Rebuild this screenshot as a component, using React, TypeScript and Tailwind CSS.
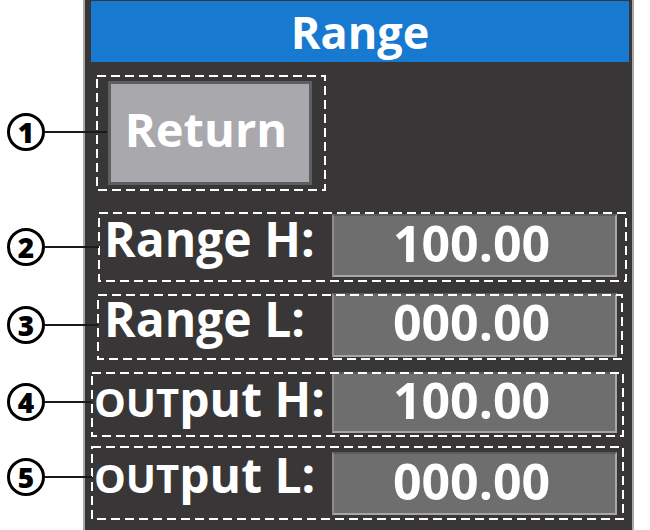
import React from "react";

const font = { fontFamily: '"Open Sans", "Noto Sans", sans-serif' };

function Dashed() {
  return (
    <svg className="pointer-events-none absolute inset-0 h-full w-full overflow-visible">
      <rect
        x="0"
        y="0"
        width="100%"
        height="100%"
        fill="none"
        stroke="#ffffff"
        strokeWidth="2"
        strokeDasharray="9 5"
      />
    </svg>
  );
}

function ValueBox({ value, className }: { value: string; className: string }) {
  return (
    <div
      className={`flex w-[285px] shrink-0 items-center justify-center border-2 border-t-[#5c5c5c] border-l-[#8c8c8c] border-r-[#a7a7a7] border-b-[#a7a7a7] bg-[#6e6e6e] pb-[6px] pr-[6px] text-[50px] font-bold leading-none text-white ${className}`}
    >
      {value}
    </div>
  );
}

function Callout({ n, top, len }: { n: string; top: string; len: string }) {
  return (
    <div className={`absolute left-[7px] flex items-center ${top}`}>
      <div className="flex h-[38px] w-[38px] items-center justify-center rounded-full border-[3px] border-black bg-white pb-[1px] text-[28px] font-extrabold leading-none text-black">
        {n}
      </div>
      <div className={`h-[2px] bg-[#1a1a1a] ${len}`} />
    </div>
  );
}

export default function App() {
  return (
    <div className="relative h-[530px] w-[650px] overflow-hidden bg-white" style={font}>
      <div className="ml-[83px] flex h-[530px] w-[551px] flex-col border-x-2 border-[#a9a8ad] bg-[#383637]">
        {/* Header */}
        <div className="ml-[6px] mr-[3px] mt-[1px] flex h-[61px] items-start justify-center bg-[#1779cf] text-[45px] font-bold leading-[61px] text-white">
          Range
        </div>

        {/* Return */}
        <div className="relative ml-[12px] mt-[14px] h-[114px] w-[228px]">
          <Dashed />
          <div className="ml-[11px] mt-[5px] flex h-[104px] w-[204px] items-center justify-center border-[3px] border-[#5f5e62] bg-[#a9a8ad] pb-[8px] pr-[8px] text-[47px] font-bold leading-none text-white">
            Return
          </div>
        </div>

        {/* Range H */}
        <div className="relative ml-[14px] mt-[23px] flex h-[68px] w-[527px] items-start">
          <Dashed />
          <div className="mt-[2px] w-[233px] shrink-0 whitespace-nowrap pl-[5px] text-[48px] font-bold leading-none text-white">
            Range H:
          </div>
          <ValueBox value="100.00" className="mt-[1px] h-[63px]" />
        </div>

        {/* Range L */}
        <div className="relative ml-[13px] mt-[14px] flex h-[64px] w-[524px] items-start">
          <Dashed />
          <div className="mt-[0px] w-[234px] shrink-0 whitespace-nowrap pl-[6px] text-[48px] font-bold leading-none text-white">
            Range L:
          </div>
          <ValueBox value="000.00" className="-mt-[2px] h-[64px]" />
        </div>

        {/* OUTput H */}
        <div className="relative ml-[7px] mt-[14px] flex h-[63px] w-[531px] items-start">
          <Dashed />
          <div className="mt-[2px] w-[240px] shrink-0 whitespace-nowrap pl-[2px] text-[48px] font-bold leading-none text-white">
            <span className="text-[40px]">OUT</span>put H:
          </div>
          <ValueBox value="100.00" className="-mt-[1px] h-[61px]" />
        </div>

        {/* OUTput L */}
        <div className="relative ml-[7px] mt-[11px] flex h-[72px] w-[531px] items-start">
          <Dashed />
          <div className="mt-[4px] w-[240px] shrink-0 whitespace-nowrap pl-[2px] text-[48px] font-bold leading-none text-white">
            <span className="text-[40px]">OUT</span>put L:
          </div>
          <ValueBox value="000.00" className="mt-[5px] h-[63px]" />
        </div>
      </div>

      {/* Callouts */}
      <Callout n="1" top="top-[113px]" len="w-[62px]" />
      <Callout n="2" top="top-[228px]" len="w-[54px]" />
      <Callout n="3" top="top-[306px]" len="w-[53px]" />
      <Callout n="4" top="top-[383px]" len="w-[47px]" />
      <Callout n="5" top="top-[458px]" len="w-[47px]" />
    </div>
  );
}
